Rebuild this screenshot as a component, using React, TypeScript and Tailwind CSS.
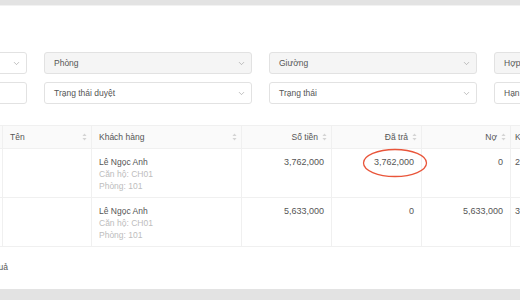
import { ChevronDown } from "lucide-react";

function SortIcon() {
  return (
    <svg width="5" height="8" viewBox="0 0 5 8" className="shrink-0">
      <path d="M2.5 0.5 L4.5 3 L0.5 3 Z" fill="#d4d4d4" />
      <path d="M2.5 7.5 L4.5 5 L0.5 5 Z" fill="#d4d4d4" />
    </svg>
  );
}

function Field({ label, gray, chevron = true }: { label?: string; gray?: boolean; chevron?: boolean }) {
  return (
    <div
      className={`h-[22px] w-[208px] shrink-0 rounded-[3px] border border-[#e2e2e2] flex items-center justify-between pl-[9px] pr-[5px] ${
        gray ? "bg-[#f5f5f5]" : "bg-white"
      }`}
    >
      <span className="text-[8.5px] text-[#555]">{label}</span>
      {chevron && <ChevronDown size={9} strokeWidth={1.6} className="text-[#999]" />}
    </div>
  );
}

const cols = "grid grid-cols-[63px_89px_150px_90px_90px_89px_120px]";

function Customer() {
  return (
    <div className="flex flex-col pl-[7px] pt-[7px] leading-[12px] text-[8.5px]">
      <span className="text-[#555]">Lê Ngọc Anh</span>
      <span className="text-[#bdbdbd]">Căn hộ: CH01</span>
      <span className="text-[#bdbdbd]">Phòng: 101</span>
    </div>
  );
}

export default function App() {
  const cell = "border-r border-[#f0f0f0]";
  const num = "pr-[7px] pt-[7px] text-right text-[9px] leading-[12px] text-[#555]";
  return (
    <div
      className="w-[520px] h-[300px] overflow-hidden bg-[#e3e3e3] pt-[5px]"
      style={{ fontFamily: '"Liberation Sans", Arial, sans-serif' }}
    >
      <div className="h-[284px] bg-white border-t border-[#f2f2f2] overflow-hidden">
        {/* filters */}
        <div className="ml-[-181px] mt-[46px] flex flex-col gap-[8px]">
          <div className="flex gap-[17px]">
            <Field />
            <Field label="Phòng" gray />
            <Field label="Giường" gray />
            <Field label="Hợp đồng" gray />
          </div>
          <div className="flex gap-[17px]">
            <Field chevron={false} />
            <Field label="Trạng thái duyệt" />
            <Field label="Trạng thái" />
            <Field label="Hạn thanh toán" />
          </div>
        </div>

        {/* table */}
        <div className="ml-[-60px] mt-[21px] w-[700px]">
          <div className={`${cols} h-[24px] bg-[#fafafa] border-y border-[#f0f0f0] text-[8.5px] text-[#555]`}>
            <div className={cell} />
            <div className={`${cell} flex items-center justify-between pl-[7px] pr-[4px]`}>
              <span>Tên</span>
              <SortIcon />
            </div>
            <div className={`${cell} flex items-center justify-between pl-[7px] pr-[4px]`}>
              <span>Khách hàng</span>
              <SortIcon />
            </div>
            <div className={`${cell} flex items-center justify-end gap-[4px] pr-[4px]`}>
              <span>Số tiền</span>
              <SortIcon />
            </div>
            <div className={`${cell} flex items-center justify-end gap-[4px] pr-[4px]`}>
              <span>Đã trả</span>
              <SortIcon />
            </div>
            <div className={`${cell} flex items-center justify-end gap-[4px] pr-[4px]`}>
              <span>Nợ</span>
              <SortIcon />
            </div>
            <div className="flex items-center pl-[4px]">
              <span>Kỳ</span>
            </div>
          </div>

          <div className={`${cols} h-[49px] border-b border-[#f0f0f0]`}>
            <div className={cell} />
            <div className={cell} />
            <div className={cell}>
              <Customer />
            </div>
            <div className={`${cell} ${num}`}>3,762,000</div>
            <div className={`${cell} ${num} relative`}>
              3,762,000
              <svg
                width="66"
                height="30"
                viewBox="0 0 66 30"
                className="absolute left-[30px] top-[-1px] pointer-events-none"
              >
                <ellipse cx="33" cy="15" rx="31.5" ry="13.5" fill="none" stroke="#e9553a" strokeWidth="1.3" />
              </svg>
            </div>
            <div className={`${cell} ${num}`}>0</div>
            <div className="pl-[4px] pt-[7px] text-[9px] leading-[12px] text-[#555]">2</div>
          </div>

          <div className={`${cols} h-[49px] border-b border-[#f0f0f0]`}>
            <div className={cell} />
            <div className={cell} />
            <div className={cell}>
              <Customer />
            </div>
            <div className={`${cell} ${num}`}>5,633,000</div>
            <div className={`${cell} ${num}`}>0</div>
            <div className={`${cell} ${num}`}>5,633,000</div>
            <div className="pl-[4px] pt-[7px] text-[9px] leading-[12px] text-[#555]">3</div>
          </div>
        </div>

        <div className="ml-[-80px] mt-[14px] w-[88px] text-right text-[8.5px] text-[#555]">2 kết quả</div>
      </div>
    </div>
  );
}
